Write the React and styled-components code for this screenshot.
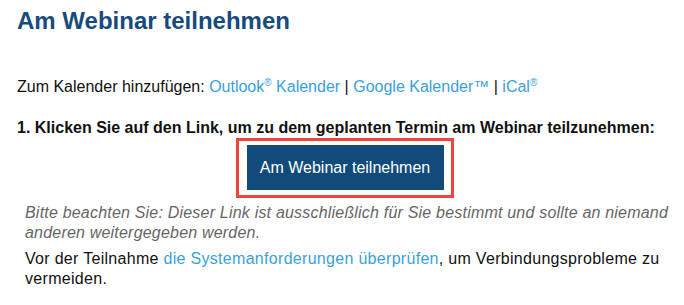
import React from 'react';
import styled, { createGlobalStyle } from 'styled-components';

const GlobalStyle = createGlobalStyle`
  body {
    margin: 0;
    background: #fff;
    font-family: "Liberation Sans", Arial, sans-serif;
    color: #111;
  }
`;

const Page = styled.div`
  width: 655px;
  padding: 7px 0 0 17px;
`;

const Title = styled.h1`
  margin: 0;
  font-size: 24px;
  line-height: 28px;
  font-weight: bold;
  color: #174b7d;
`;

const Line = styled.p`
  margin: ${({ $top }) => $top}px 0 0;
  font-size: 16px;
  line-height: 20px;
  white-space: nowrap;
`;

const Step = styled(Line)`
  font-weight: bold;
`;

const Link = styled.a`
  color: #3b9fdc;
  text-decoration: none;
`;

const Sup = styled.sup`
  font-size: 10px;
  line-height: 0;
  vertical-align: 6px;
`;

const ButtonRow = styled.div`
  display: flex;
  justify-content: center;
`;

const Highlight = styled.div`
  border: 3px solid #e8463f;
  padding: 4px 7px 5px 8px;
`;

const JoinButton = styled.button`
  display: block;
  width: 197px;
  height: 45px;
  border: 0;
  background: #114b7c;
  color: #fff;
  font-family: "Liberation Sans", Arial, sans-serif;
  font-size: 16px;
  cursor: pointer;
`;

const Notes = styled.div`
  padding-left: 8px;
  margin-right: -8px;
`;

const Note = styled.p`
  margin: ${({ $top }) => $top}px 0 0;
  font-size: 16px;
  line-height: 20px;
  letter-spacing: ${({ $italic }) => ($italic ? '0.2px' : '0.3px')};
  font-style: ${({ $italic }) => ($italic ? 'italic' : 'normal')};
  color: ${({ $italic }) => ($italic ? '#666' : '#111')};
`;

export default function App() {
  return (
    <>
      <GlobalStyle />
      <Page>
        <Title>Am Webinar teilnehmen</Title>
        <Line $top={42}>
          Zum Kalender hinzufügen: <Link href="#">Outlook<Sup>®</Sup> Kalender</Link> |{' '}
          <Link href="#">Google Kalender™</Link> | <Link href="#">iCal<Sup>®</Sup></Link>
        </Line>
        <Step $top={21}>
          1. Klicken Sie auf den Link, um zu dem geplanten Termin am Webinar teilzunehmen:
        </Step>
        <ButtonRow>
          <Highlight>
            <JoinButton>Am Webinar teilnehmen</JoinButton>
          </Highlight>
        </ButtonRow>
        <Notes>
          <Note $top={5} $italic>
            Bitte beachten Sie: Dieser Link ist ausschließlich für Sie bestimmt und sollte an niemand
            anderen weitergegeben werden.
          </Note>
          <Note $top={6}>
            Vor der Teilnahme <Link href="#">die Systemanforderungen überprüfen</Link>, um
            Verbindungsprobleme zu vermeiden.
          </Note>
        </Notes>
      </Page>
    </>
  );
}
